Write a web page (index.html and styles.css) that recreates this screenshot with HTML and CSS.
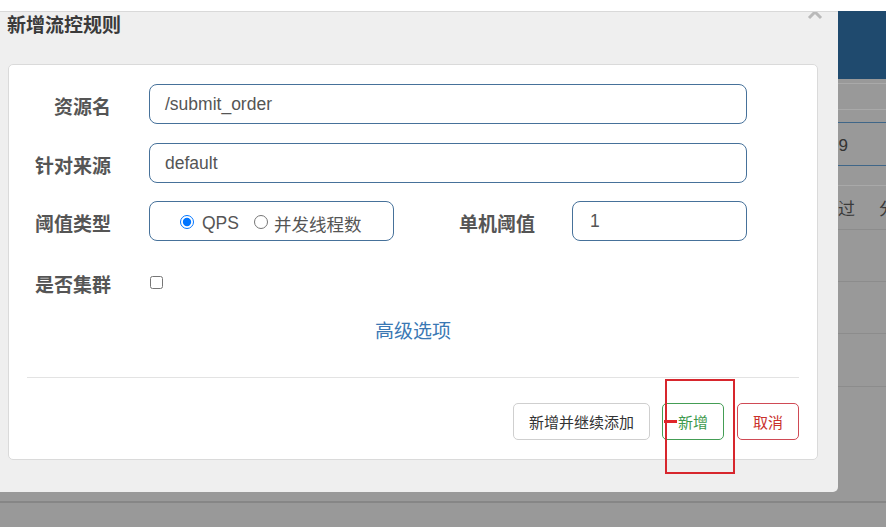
FILE: index.html
```html
<!DOCTYPE html>
<html lang="zh-CN">
<head>
<meta charset="utf-8">
<title>新增流控规则</title>
<link rel="stylesheet" href="styles.css">
</head>
<body>
<div class="topbar"></div>
<div class="main">
  <div class="modal">
    <svg class="close" width="16" height="16" viewBox="0 0 16 16"><path d="M2 2 L14 14 M14 2 L2 14" stroke="#b9b9b9" stroke-width="3" fill="none"/></svg>
    <div class="modal-title">新增流控规则</div>
    <div class="card">
      <div class="form">
        <div class="row">
          <label class="lbl">资源名</label>
          <div class="input wide">/submit_order</div>
        </div>
        <div class="row gap18">
          <label class="lbl">针对来源</label>
          <div class="input wide">default</div>
        </div>
        <div class="row gap21">
          <label class="lbl">阈值类型</label>
          <div class="radio-group">
            <label class="radio"><input type="radio" name="t" checked><span>QPS</span></label>
            <label class="radio r2"><input type="radio" name="t"><span>并发线程数</span></label>
          </div>
          <label class="lbl lbl2">单机阈值</label>
          <div class="input small">1</div>
        </div>
        <div class="row">
          <label class="lbl">是否集群</label>
          <input class="check" type="checkbox">
        </div>
        <div class="adv">高级选项</div>
      </div>
      <div class="divider"></div>
      <div class="footer">
        <button class="btn">新增并继续添加</button>
        <button class="btn btn-green">新增</button>
        <button class="btn btn-red">取消</button>
      </div>
    </div>
  </div>
  <div class="side">
    <div class="s-head"></div>
    <div class="s s1"></div>
    <div class="s s2"></div>
    <div class="s s3"></div>
    <div class="s s4"><span class="s-num">09</span></div>
    <div class="s s5"></div>
    <div class="s s6"><span class="s-a">通过</span><span class="s-b">分</span></div>
    <div class="s s7"></div>
    <div class="s s8"></div>
    <div class="s s9"></div>
  </div>
</div>
<div class="bottom"></div>
<div class="mark"></div>
<div class="mark-dash"></div>
</body>
</html>
```

FILE: styles.css
```css
html, body {
  margin: 0;
  padding: 0;
}
body {
  width: 886px;
  height: 527px;
  overflow: hidden;
  background: #999;
  position: relative;
  font-family: "Liberation Sans", "Noto Sans CJK SC", sans-serif;
}
.topbar {
  height: 11px;
  background: #fff;
}
.main {
  display: flex;
  height: 481px;
}
.modal {
  width: 838px;
  flex: none;
  box-sizing: border-box;
  background: #efefef;
  border-top: 1px solid #d9d9d9;
  border-bottom-right-radius: 5px;
  position: relative;
  overflow: hidden;
}
.close {
  position: absolute;
  left: 807px;
  top: -8px;
}
.modal-title {
  padding-left: 7px;
  height: 24px;
  line-height: 24px;
  font-family: "Noto Sans CJK SC", sans-serif;
  font-weight: bold;
  font-size: 19px;
  color: #3a3a3a;
  margin-bottom: 28px;
}
.card {
  margin: 0 20px 0 8px;
  background: #fff;
  border: 1px solid #dadada;
  border-radius: 5px;
}
.form {
  padding-top: 19px;
}
.row {
  display: flex;
  align-items: center;
  height: 40px;
  margin-bottom: 19px;
}
.row.gap18 { margin-bottom: 18px; }
.row.gap21 { margin-bottom: 21px; }
.lbl {
  width: 102px;
  margin-right: 38px;
  text-align: right;
  font-family: "Noto Sans CJK SC", sans-serif;
  font-weight: bold;
  font-size: 19px;
  color: #555;
  padding-top: 3px;
}
.lbl2 {
  width: 141px;
  margin-right: 37px;
}
.input {
  box-sizing: border-box;
  height: 40px;
  border: 1px solid #46719a;
  border-radius: 8px;
  padding-left: 15px;
  padding-top: 1px;
  font-size: 17.5px;
  line-height: 36px;
  color: #555;
}
.input.wide { width: 598px; }
.input.small { width: 175px; padding-left: 17px; }
.radio-group {
  box-sizing: border-box;
  width: 245px;
  height: 40px;
  border: 1px solid #46719a;
  border-radius: 8px;
  display: flex;
  align-items: center;
  padding-left: 30px;
  padding-top: 4px;
  font-size: 17.5px;
  color: #555;
}
.radio {
  display: flex;
  align-items: center;
}
.radio input {
  margin: 0 8px 3px 0;
  width: 14px;
  height: 14px;
  accent-color: #0075ff;
}
.radio.r2 {
  margin-left: 15px;
}
.radio.r2 input { margin-right: 6px; }
.radio span {
  font-family: "Liberation Sans", "Noto Sans CJK SC", sans-serif;
}
.check {
  margin: 0 0 0 1px;
  width: 13px;
  height: 13px;
}
.adv {
  margin-top: -11px;
  height: 40px;
  line-height: 40px;
  text-align: center;
  font-family: "Noto Sans CJK SC", sans-serif;
  font-size: 19px;
  color: #3a78b4;
}
.divider {
  margin: 27px 18px 0 18px;
  border-top: 1px solid #e3e3e3;
}
.footer {
  display: flex;
  justify-content: flex-end;
  padding: 25px 18px 19px 0;
}
.btn {
  height: 37px;
  box-sizing: border-box;
  background: #fff;
  border: 1px solid #cfcfcf;
  border-radius: 5px;
  font-family: "Noto Sans CJK SC", sans-serif;
  font-size: 15px;
  color: #333;
  padding: 0;
  width: 137px;
  margin-left: 12px;
}
.btn-green {
  width: 62px;
  border-color: #449d55;
  color: #3d9a4d;
}
.btn-red {
  width: 62px;
  margin-left: 13px;
  border-color: #cf4a55;
  color: #c9302c;
}
.side {
  flex: 1;
  overflow: hidden;
  display: flex;
  flex-direction: column;
  font-family: "Noto Sans CJK SC", sans-serif;
  color: #3a3a3a;
  font-size: 17px;
  white-space: nowrap;
}
.s-head {
  height: 68px;
  background: #1f4a6e;
}
.s { border-bottom: 1px solid #a9a9a9; flex: none; }
.s1 { height: 4px; }
.s2 { height: 25px; }
.s3 { height: 12px; border-bottom-color: #3f6688; }
.s4 { height: 42px; line-height: 42px; border-bottom-color: #3f6688; }
.s5 { height: 19px; }
.s6 { height: 43px; line-height: 43px; border-bottom-color: #8c8c8c; }
.s7 { height: 51px; border-bottom-color: #8c8c8c; }
.s8 { height: 51px; border-bottom-color: #8c8c8c; }
.s9 { height: 52px; border-bottom-color: #8c8c8c; }
.s-num {
  display: inline-block;
  margin-left: -9px;
  font-family: "Liberation Sans", sans-serif;
  font-size: 17px;
  color: #333;
}
.s-a {
  display: inline-block;
  margin-left: -17px;
}
.s-b {
  display: inline-block;
  margin-left: 24px;
}
.bottom {
  height: 9px;
  border-bottom: 2px solid #868686;
}
.mark {
  position: absolute;
  left: 665px;
  top: 379px;
  width: 66px;
  height: 91px;
  border: 2px solid #d7262d;
}
.mark-dash {
  position: absolute;
  left: 664px;
  top: 420px;
  width: 13px;
  height: 3px;
  background: #e0262a;
}
```
